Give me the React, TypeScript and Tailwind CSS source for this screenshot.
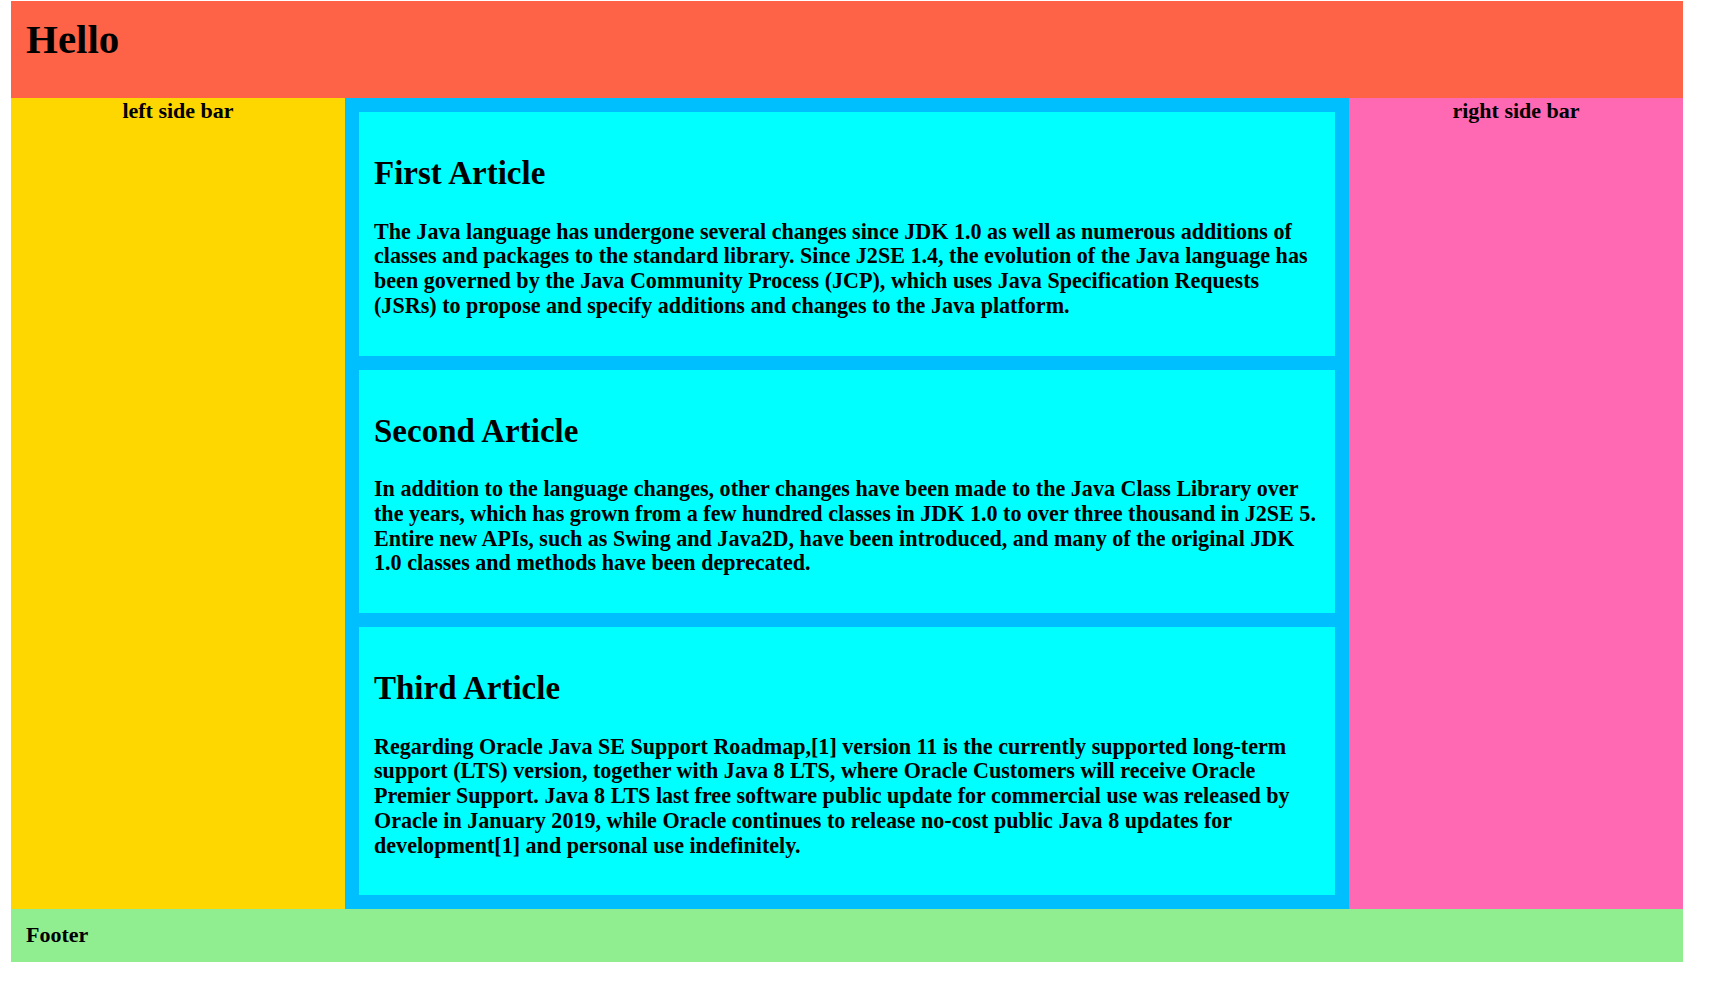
import React from "react";

const articles = [
  {
    title: "First Article",
    body: "The Java language has undergone several changes since JDK 1.0 as well as numerous additions of classes and packages to the standard library. Since J2SE 1.4, the evolution of the Java language has been governed by the Java Community Process (JCP), which uses Java Specification Requests (JSRs) to propose and specify additions and changes to the Java platform.",
  },
  {
    title: "Second Article",
    body: "In addition to the language changes, other changes have been made to the Java Class Library over the years, which has grown from a few hundred classes in JDK 1.0 to over three thousand in J2SE 5. Entire new APIs, such as Swing and Java2D, have been introduced, and many of the original JDK 1.0 classes and methods have been deprecated.",
  },
  {
    title: "Third Article",
    body: "Regarding Oracle Java SE Support Roadmap,[1] version 11 is the currently supported long-term support (LTS) version, together with Java 8 LTS, where Oracle Customers will receive Oracle Premier Support. Java 8 LTS last free software public update for commercial use was released by Oracle in January 2019, while Oracle continues to release no-cost public Java 8 updates for development[1] and personal use indefinitely.",
  },
];

export default function App() {
  return (
    <div
      className="min-h-[999px] bg-white text-black font-bold pt-[1px]"
      style={{ fontFamily: '"Liberation Serif", "Times New Roman", serif' }}
    >
      <div className="ml-[11px] w-[1672px]">
        <header className="h-[97px] bg-[#ff6347] px-[15px] pt-[18px]">
          <h1 className="m-0 text-[41px] leading-[41px] font-bold">Hello</h1>
        </header>
        <div className="flex">
          <aside className="w-[334px] shrink-0 bg-[#ffd700] text-center text-[22px] leading-[25px]">
            left side bar
          </aside>
          <main className="flex-1 bg-[#00bfff] p-[14px] flex flex-col gap-[14px]">
            {articles.map((a) => (
              <article key={a.title} className="bg-[#00ffff] p-[15px]">
                <h2 className="mt-[28px] mb-[27px] text-[33px] leading-[37.5px] font-bold">
                  {a.title}
                </h2>
                <p className="mb-[22px] text-[22.1px] leading-[24.75px]">{a.body}</p>
              </article>
            ))}
          </main>
          <aside className="w-[334px] shrink-0 bg-[#ff69b4] text-center text-[22px] leading-[25px]">
            right side bar
          </aside>
        </div>
        <footer className="bg-[#90ee90] px-[15px] py-[14px] text-[22px] leading-[24.5px]">
          Footer
        </footer>
      </div>
    </div>
  );
}
